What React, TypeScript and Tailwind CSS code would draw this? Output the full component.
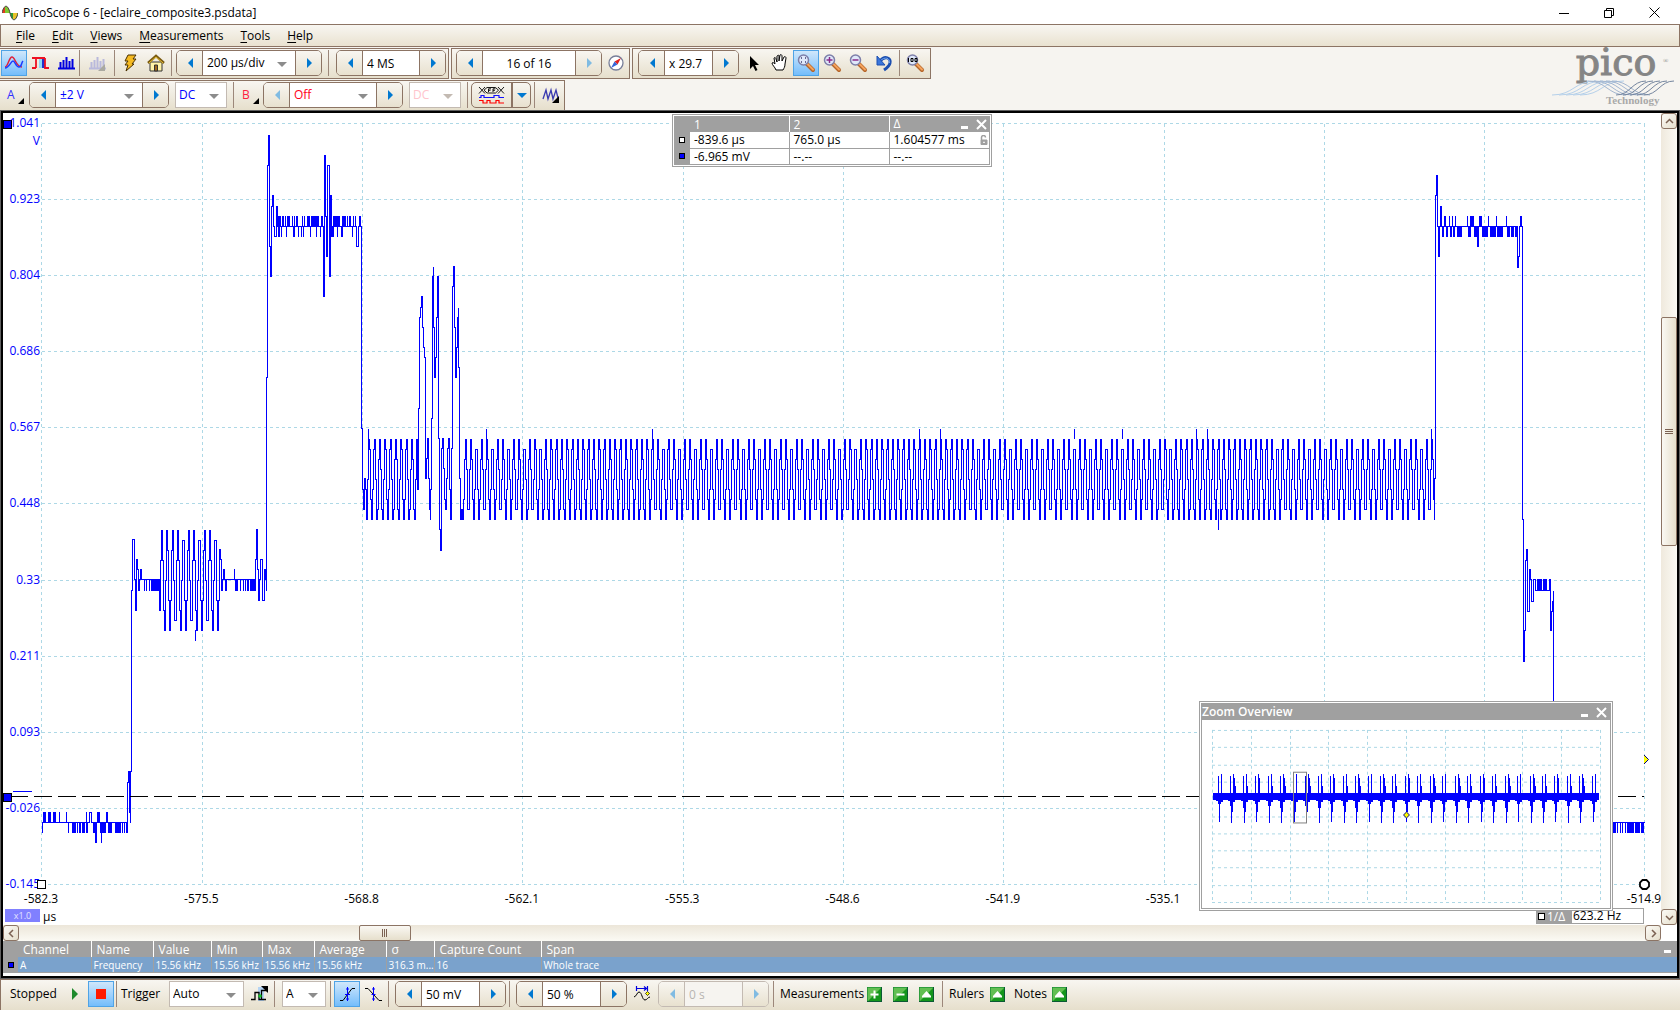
import React from "react";

type Point = [number, number];
type Spike = [number, number, number, number];

const yLabels = ["1.041", "0.923", "0.804", "0.686", "0.567", "0.448", "0.33", "0.211", "0.093", "-0.026", "-0.145"];
const xLabels = ["-582.3", "-575.5", "-568.8", "-562.1", "-555.3", "-548.6", "-541.9", "-535.1", "-528.4", "-521.7", "-514.9"];
const gridX = [41, 202, 362, 522, 683, 843, 1003, 1164, 1324, 1484, 1644];
const gridY = [123, 199, 275, 351, 427, 503, 580, 656, 732, 808, 884];

/* ---------- Trace ---------- */

const steps = (points: Point[]) => points.map(([x, y], i) => (i === 0 ? `M${x} ${y}` : `H${x}V${y}`)).join("");

// vertical excursions from a level, given as [first x, width] pairs
const spikes = (y: number, height: number, list: [number, number][]): Spike[] => list.map(([x, w]) => [x, y, w, height]);

const carrier = (from: number, to: number, peak: number, center: number, amp: number): Point[] => {
	const points: Point[] = [];
	for (let x = from; x <= to; x++) {
		const wave = Math.cos((2 * Math.PI * (x - peak)) / 5.339);
		points.push([x, center - Math.round((wave * amp) / 10) * 10]);
	}
	return points;
};

const tracePoints: Point[] = [
	[42, 832], [42, 822], [89, 822], [89, 812], [91, 812], [91, 822], [127, 822], [127, 832], [127, 782], [128, 771], [129, 812], [130, 822], [130, 771],
	[131, 590], [132, 539], [133, 539], [134, 579], [135, 610], [136, 559], [137, 569], [138, 579], [159, 579],
	...carrier(159, 218, 161, 580, 49),
	[219, 549], [220, 559], [221, 579], [254, 579], [255, 559], [256, 529], [257, 569], [258, 600], [259, 579], [260, 559], [261, 559], [262, 579], [262, 600], [263, 600], [264, 569], [265, 579],
	[266, 590], [266, 377], [267, 165], [268, 135], [269, 145], [269, 246], [270, 276], [271, 206], [272, 195], [273, 226], [274, 236], [276, 206], [277, 226],
	[323, 226], [323, 296], [324, 155], [325, 155], [325, 216], [326, 256], [327, 165], [328, 165], [329, 276], [330, 195], [331, 195], [331, 236],
	[333, 226], [356, 226], [356, 246], [357, 246], [358, 226], [361, 226], [361, 428], [362, 489], [363, 509], [364, 478], [365, 489],
	...carrier(366, 416, 368.3, 479, 40),
	[417, 489], [418, 408], [419, 317], [420, 307], [421, 296], [422, 327], [423, 347], [424, 357], [425, 478], [426, 458], [427, 438], [428, 478], [429, 509],
	[430, 519], [430, 489], [431, 418], [432, 276], [433, 266], [433, 327], [434, 377], [435, 377], [435, 357], [436, 317], [437, 276], [438, 286], [438, 438],
	[439, 529], [440, 550], [441, 529], [441, 448], [442, 438], [443, 468], [444, 499], [445, 509], [446, 478], [447, 448], [448, 438], [449, 489],
	[450, 519], [451, 448], [452, 286], [453, 266], [454, 276], [454, 327], [455, 377], [456, 347], [457, 317], [458, 307], [458, 367], [459, 478],
	[460, 519], [461, 509],
	...carrier(462, 1433, 470.2, 479, 39),
	[1434, 519], [1434, 478], [1435, 478], [1435, 195], [1436, 175], [1437, 175], [1437, 226], [1438, 256], [1439, 226], [1440, 206], [1441, 226],
	[1517, 226], [1517, 267], [1518, 256], [1519, 226], [1522, 226], [1522, 519], [1523, 661], [1524, 661], [1524, 630], [1525, 560], [1526, 549],
	[1527, 569], [1527, 611], [1528, 611], [1529, 569], [1530, 579], [1531, 601], [1532, 601], [1533, 579], [1535, 579], [1535, 590], [1550, 590],
	[1550, 630], [1551, 630], [1551, 611], [1552, 601], [1553, 590], [1553, 822], [1644, 822],
];

const traceSpikes: Spike[] = [
	...spikes(812, 10, [[43, 3], [48, 3], [53, 3], [59, 1], [66, 1], [86, 1], [97, 3], [106, 2]]),
	...spikes(822, 11, [[68, 1], [72, 4], [77, 1], [79, 2], [82, 3], [86, 2], [93, 2], [100, 6], [108, 4], [115, 6], [122, 1], [124, 1], [126, 2]]),
	...spikes(822, 21, [[95, 2], [101, 1]]),
	...spikes(579, 12, [[138, 2], [144, 1], [146, 1], [149, 1], [151, 8], [221, 2], [225, 2], [235, 3], [240, 1], [243, 1], [245, 1], [247, 2], [250, 6]]),
	...spikes(569, 10, [[140, 2], [223, 2], [234, 1], [264, 2]]),
	...spikes(630, 11, [[195, 1]]),
	...spikes(216, 10, [[278, 3], [282, 2], [285, 1], [287, 3], [292, 1], [294, 1], [296, 2], [302, 1], [304, 1], [307, 3], [311, 8], [321, 2], [333, 7], [342, 4], [347, 1], [349, 2], [353, 1], [355, 1], [359, 2]]),
	...spikes(226, 11, [[278, 2], [281, 1], [286, 1], [293, 2], [298, 1], [301, 1], [303, 1], [310, 1], [316, 1], [320, 1], [331, 3], [337, 1], [341, 2], [352, 1]]),
	...spikes(216, 10, [[1441, 1], [1444, 2], [1449, 1], [1452, 1], [1455, 1], [1467, 1], [1470, 4], [1479, 3], [1488, 1], [1496, 1], [1506, 1], [1520, 2]]),
	...spikes(226, 11, [[1442, 2], [1446, 2], [1450, 2], [1453, 2], [1457, 5], [1468, 3], [1474, 3], [1482, 6], [1490, 6], [1497, 6], [1507, 3], [1511, 3], [1515, 3]]),
	...spikes(226, 21, [[1477, 2]]),
	...spikes(579, 11, [[1537, 5], [1543, 4], [1549, 2]]),
	...spikes(822, 11, [[1613, 3], [1617, 1], [1620, 1], [1622, 1], [1625, 1], [1627, 7], [1635, 5], [1641, 3]]),
	...spikes(429, 10, [[368, 1], [486, 1], [652, 1], [919, 1], [940, 1], [1074, 1], [1122, 1], [1196, 1], [1207, 1], [1431, 1]]),
	...spikes(509, 21, [[1218, 1]]),
];

const trace = steps(tracePoints);

const Plot = () => (
	<svg className="absolute inset-0 w-full h-full" viewBox="3 113 1658 812" preserveAspectRatio="none" shapeRendering="crispEdges" fill="none">
		<g transform="translate(.5 .5)" stroke="#add8e6" strokeDasharray="3 3">
			{gridX.map((x) => (
				<path key={x} d={`M${x} 123V884`} />
			))}
			{gridY.map((y) => (
				<path key={y} d={`M41 ${y}H1644`} />
			))}
		</g>
		<path d={trace} stroke="#0000ff" transform="translate(.5 .5)" />
		{traceSpikes.map(([x, y, w, h], i) => (
			<rect key={i} x={x} y={y} width={w} height={h} fill="#0000ff" />
		))}
		<path d="M10 796.5H1644" stroke="#000" strokeDasharray="18 6" />
		<path d="M13 791.5H32" stroke="#0000ff" />
		<path d="M3.5 120.5h8v8h-8zM3.5 793.5h8v8h-8z" fill="#0000ff" stroke="#000" />
		<path d="M1644 755v9l4-4.500z" fill="#ffff00" />
		<path d="M1644 755l4.500 4.500-4.500 4.500" stroke="#000080" shapeRendering="auto" />
	</svg>
);

const PlotHandles = () => (
	<>
		<svg className="absolute left-[34px] bottom-[36px] w-[9px] h-[9px]" viewBox="0 0 9 9">
			<rect x=".5" y=".5" width="8" height="8" fill="#fff" stroke="#000" />
		</svg>
		<svg className="absolute right-[11px] bottom-[35px] w-[11px] h-[11px]" viewBox="0 0 11 11">
			<path d="M3.500 1h4L10 3.500v4L7.500 10h-4L1 7.500v-4z" fill="#fff" stroke="#000" strokeWidth="1.800" />
		</svg>
	</>
);

/* ---------- Overview ---------- */

const bursts = Array.from({ length: 31 }, (_, i) => Math.round(1218 + i * 12.46));

const OverviewPlot = () => (
	<svg className="w-full h-full" viewBox="1202 720 408 189" preserveAspectRatio="none" shapeRendering="crispEdges" fill="none">
		<g stroke="#add8e6" strokeDasharray="3 3">
			{gridX.map((_, i) => (
				<path key={i} d={`M${Math.round(1212 + i * 38.8) + 0.5} 730V903`} />
			))}
			{gridX.map((_, i) => (
				<path key={i} d={`M1212 ${Math.round(730 + i * 17.3) + 0.5}H1601`} />
			))}
		</g>
		<g fill="#0000ff">
			<rect x="1213" y="793" width="386" height="7" />
			{bursts.map((x, i) => (
				<g key={x}>
					<rect x={x} y="776" width="1" height="22" />
					<rect x={x + 3} y="774" width="1" height="24" />
					<rect x={x + 4} y="778" width={i % 2} height="20" />
					<rect x={x + 4 + (i % 2)} y="786" width={i % 3 ? 1 : 0} height="10" />
					<rect x={x + 1} y="798" width="1" height={i % 3 ? 26 : 25} />
					<rect x={x} y="798" width="3" height={6 + (i % 3) * 2} />
					<rect x={x + 2} y="798" width={i % 4 ? 1 : 0} height="14" />
					<rect x={x + 3} y="798" width="2" height="4" />
					<rect x={x - 2} y="800" width="6" height="1" />
				</g>
			))}
		</g>
		<rect x="1293.500" y="772.500" width="13" height="51" stroke="#808080" />
		<path d="M1406.500 812.500l3 3-3 3-3-3z" fill="#ffff00" stroke="#000080" />
	</svg>
);

const PanelButtons = ({ name }: { name: string }) => (
	<div className="flex items-center text-white">
		<button aria-label={`Minimise ${name}`} className="w-[17px] h-4 flex items-center justify-center">
			<svg width="9" height="12" viewBox="0 0 9 12">
				<path d="M1 8h7v3H1z" fill="currentColor" />
			</svg>
		</button>
		<button aria-label={`Close ${name}`} className="w-[17px] h-4 flex items-center justify-center">
			<svg width="11" height="11" viewBox="0 0 11 11">
				<path d="M1 1l9 9M10 1l-9 9" stroke="currentColor" strokeWidth="2" />
			</svg>
		</button>
	</div>
);

const ZoomOverview = () => (
	<section className="absolute right-[48px] bottom-[14px] w-[414px] h-[210px] border border-[#a0a0a0] bg-white p-px">
		<div className="h-full border border-[#a0a0a0] flex flex-col">
			<header className="h-4 shrink-0 bg-[#a0a0a0] flex items-center justify-between">
				<h2 className="text-white font-semibold">Zoom Overview</h2>
				<PanelButtons name="overview" />
			</header>
			<div className="flex-1 min-h-0">
				<OverviewPlot />
			</div>
		</div>
	</section>
);

const Marker = ({ filled = false }: { filled?: boolean }) => (
	<svg className="block mx-auto" width="6" height="6" viewBox="0 0 6 6">
		<rect x=".5" y=".5" width="5" height="5" fill={filled ? "#0000ff" : "#ffffff"} stroke="#000" />
	</svg>
);

const RulerLegend = () => (
	<section className="absolute top-px left-1/2 -translate-x-1/2 w-[320px] border border-[#a0a0a0] bg-white p-px">
		<table className="w-full table-fixed border-collapse leading-[15px]">
			<colgroup>
				<col className="w-[16px]" />
				<col className="w-[99px]" />
				<col className="w-[100px]" />
				<col />
			</colgroup>
			<thead className="bg-[#a0a0a0] text-white text-left">
				<tr className="h-4">
					<th></th>
					<th className="font-normal px-1">1</th>
					<th className="font-normal px-1 border-l border-white">2</th>
					<th className="font-normal pl-1 border-l border-white">
						<div className="flex justify-between">
							Δ
							<PanelButtons name="rulers" />
						</div>
					</th>
				</tr>
			</thead>
			<tbody>
				<tr className="h-4 border-b border-[#a0a0a0]">
					<td className="bg-[#a0a0a0]"><Marker /></td>
					<td className="px-1">-839.6 µs</td>
					<td className="px-1 border-l border-[#a0a0a0]">765.0 µs</td>
					<td className="pl-1 pr-px border-l border-r border-[#a0a0a0]">
						<div className="flex items-center justify-between">
							1.604577 ms
							<svg width="8" height="10" viewBox="0 0 8 10" fill="none" stroke="#a0a0a0">
								<path d="M1.500 5V2.500a2 2 0 0 1 4 0" strokeWidth="1.500" />
								<path d="M1 5h6v4.500H1z" fill="#a0a0a0" />
								<path d="M3 7.300h2" stroke="#fff" />
							</svg>
						</div>
					</td>
				</tr>
				<tr className="h-4 border-b border-[#a0a0a0]">
					<td className="bg-[#a0a0a0]"><Marker filled /></td>
					<td className="px-1">-6.965 mV</td>
					<td className="px-1 border-l border-[#a0a0a0]">--.--</td>
					<td className="px-1 border-l border-r border-[#a0a0a0]">--.--</td>
				</tr>
			</tbody>
		</table>
	</section>
);

/* ---------- Controls ---------- */

const Arrow = ({ dir, className = "text-[#0078d0]" }: { dir: "left" | "right" | "down"; className?: string }) => {
	const d = { left: "M9 1v10L4 6z", right: "M4 1v10l5-5z", down: "M1 4h10L6 9z" }[dir];
	return (
		<svg className={className} width="12" height="12" viewBox="0 0 12 12">
			<path d={d} fill="currentColor" />
		</svg>
	);
};

interface ISpinner {
	label: string;
	value: string;
	width: string;
	select?: boolean;
	center?: boolean;
	color?: string;
	off?: "left" | "right" | "all";
}

const Spinner = ({ label, value, width, select, center, color = "text-black", off }: ISpinner) => {
	const leftOff = off === "left" || off === "all";
	const rightOff = off === "right" || off === "all";
	const border = off === "all" ? "border-[#c3bab2]" : "border-[#8c7464]";
	const button = "w-[25px] h-full flex items-center justify-center bg-linear-to-b from-[#f8f6f1] to-[#e8e1cf]";
	const field = `w-full h-full outline-none ${color} ${off === "all" ? "bg-[#f6f4f0]" : "bg-white"} ${center ? "text-center" : "px-1"}`;
	return (
		<div className={`flex h-[26px] shrink-0 border rounded-[5px] overflow-hidden ${border}`}>
			<button aria-label={`${label} down`} className={button}>
				<Arrow dir="left" className={leftOff ? "text-[#80bbe2]" : "text-[#0078d0]"} />
			</button>
			<div className={`relative border-x ${border} ${width}`}>
				{select ? (
					<>
						<select aria-label={label} defaultValue={value} className={`${field} appearance-none`}>
							<option>{value}</option>
						</select>
						<Arrow dir="down" className="absolute right-[7px] top-[7px] text-[#8c8c8c] pointer-events-none" />
					</>
				) : (
					<input aria-label={label} defaultValue={value} className={field} />
				)}
			</div>
			<button aria-label={`${label} up`} className={button}>
				<Arrow dir="right" className={rightOff ? "text-[#80bbe2]" : "text-[#0078d0]"} />
			</button>
		</div>
	);
};

const Dropdown = ({ label, value, width, color = "text-black", off }: { label: string; value: string; width: string; color?: string; off?: boolean }) => (
	<div className={`relative shrink-0 h-[26px] border border-[#c3bab2] bg-white ${width}`}>
		<select aria-label={label} defaultValue={value} className={`w-full h-full px-[3px] outline-none appearance-none ${color}`}>
			<option>{value}</option>
		</select>
		<Arrow dir="down" className={`absolute right-[6px] top-[7px] pointer-events-none ${off ? "text-[#c3bab2]" : "text-[#8c8c8c]"}`} />
	</div>
);

const Separator = () => <div className="w-px h-[26px] shrink-0 bg-[#9c877a]"></div>;

const Tool = ({ label, on, children }: { label: string; on?: boolean; children: React.ReactNode }) => (
	<button aria-label={label} className={`size-[26px] shrink-0 flex items-center justify-center ${on ? "border border-[#4fa3e6] bg-linear-to-b from-[#cfe7fb] to-[#74bdfb]" : ""}`}>
		<svg className="shrink-0" width="20" height="20" viewBox="0 0 20 20" fill="none">
			{children}
		</svg>
	</button>
);

const Strip = ({ className, children }: { className: string; children: React.ReactNode }) => (
	<div className={`h-[31px] flex items-center pb-px border border-[#8c7464] bg-linear-to-b from-[#f8f6f1] to-[#e6dfcc] ${className}`}>{children}</div>
);

const Magnifier = ({ children }: { children?: React.ReactNode }) => (
	<>
		<path d="M11 11l6 6" stroke="#b5652a" strokeWidth="4" strokeLinecap="round" />
		<path d="M11.500 11l5.500 5.500" stroke="#f5a35c" strokeWidth="2" strokeLinecap="round" />
		<circle cx="7.500" cy="7" r="5" fill="#dfe8fa" stroke="#7d7fa8" strokeWidth="1.500" />
		{children}
	</>
);

const GreenButton = ({ label, d }: { label: string; d: string }) => (
	<button aria-label={label} className="size-[15px] shrink-0">
		<svg width="15" height="15" viewBox="0 0 15 15">
			<rect x=".5" y=".5" width="14" height="14" fill="#14961c" stroke="#0b5a34" />
			<path d="M1 1h13L1 14z" fill="#62bf52" />
			<path d="M.500 14V.500H14" fill="none" stroke="#2f9d3c" />
			<path d={d} fill="#fff" />
		</svg>
	</button>
);

const plus = "M6.500 3.500h2v3h3v2h-3v3h-2v-3h-3v-2h3z";
const minus = "M3.500 6.500h8v2h-8z";
const up = "M7.500 4l4.500 5v1.500H3V9z";

/* ---------- Bars ---------- */

const TitleBar = () => (
	<header className="h-6 shrink-0 flex items-center bg-white pt-px">
		<svg className="ml-[2px]" width="16" height="16" viewBox="0 0 16 16">
			<path d="M0 8C2 -1 6 -1 8 8z" fill="#e23a1c" />
			<path d="M3 8V1.300C5.500 1 7 4 8 8z" fill="#7ec832" />
			<path d="M8 8c2 9 6 9 8 0z" fill="#2c9a34" />
			<path d="M11 8v6.300c2 1 4-2 5-6.300z" fill="#e8c229" />
			<path d="M0 8C2 -1 6 -1 8 8s6 9 8 0" fill="none" stroke="#444" />
		</svg>
		<h1 className="ml-[5px] flex-1">PicoScope 6 - [eclaire_composite3.psdata]</h1>
		<div className="flex mr-[3px]">
			<button aria-label="Minimise" className="w-[45px] h-6 flex items-center justify-center">
				<svg width="10" height="10" viewBox="0 0 10 10"><path d="M0 5.500h10" stroke="#000" /></svg>
			</button>
			<button aria-label="Restore" className="w-[45px] h-6 flex items-center justify-center">
				<svg width="10" height="10" viewBox="0 0 10 10" fill="none"><path d="M.500 2.500h7v7h-7zM2.500 2.500v-2h7v7h-2" stroke="#000" /></svg>
			</button>
			<button aria-label="Close" className="w-[46px] h-6 flex items-center justify-center">
				<svg width="11" height="11" viewBox="0 0 11 11"><path d="M.500.500l10 10M10.500.500l-10 10" stroke="#000" /></svg>
			</button>
		</div>
	</header>
);

const MenuBar = () => (
	<nav className="h-[23px] shrink-0 flex items-center gap-[17px] pl-[15px] border border-[#8c7464] bg-linear-to-b from-[#f8f6f1] to-[#e9e2d0]">
		{["File", "Edit", "Views", "Measurements", "Tools", "Help"].map((item) => (
			<button key={item}>
				<span className="underline underline-offset-2">{item[0]}</span>
				{item.slice(1)}
			</button>
		))}
	</nav>
);

const ChannelButton = ({ name, color }: { name: string; color: string }) => (
	<button className={`w-6 h-[26px] shrink-0 flex items-center justify-between pl-[7px] ${color}`}>
		{name}
		<svg className="self-end mb-1" width="6" height="6" viewBox="0 0 6 6"><path d="M6 0v6H0z" fill="#000" /></svg>
	</button>
);

const Logo = () => (
	<svg className="overflow-visible" width="124" height="60" viewBox="0 0 124 60" fill="none">
		<text x="64" y="27" textAnchor="middle" fontFamily="'DejaVu Serif', serif" fontSize="38" fill="#858585" stroke="#858585" strokeWidth="1">pico</text>
		<text x="111" y="15" fontFamily="'Liberation Serif', serif" fontSize="7" fill="#858585">®</text>
		{[0, 1, 2, 3, 4].map((i) => (
			<path key={i} d={`M${i * 7} 47c22 0 22-14 44-14`} stroke="#b5d0ea" />
		))}
		{[0, 1, 2, 3, 4].map((i) => (
			<path key={i} d={`M${36 + i * 6} 33c18 0 20 14 38 14`} stroke="#a3b6d0" />
		))}
		{[0, 1, 2, 3, 4].map((i) => (
			<path key={i} d={`M${64 + i * 7} 47c14 0 16-14 30-14`} stroke="#75869f" />
		))}
		<text x="54" y="56" fontFamily="'Liberation Serif', serif" fontWeight="bold" fontSize="11" fill="#a9a9a9">Technology</text>
	</svg>
);

const spectrum = "M2 15.500h17M4.500 15V9M7.500 15V7M10.500 15V4M13.500 15V8M16.500 15V6";

const Toolbars = () => (
	<div className="h-[63px] shrink-0 flex items-start justify-between bg-[#f6f4f0] pt-px">
		<div className="flex flex-col gap-px">
			<div className="flex gap-[2px]">
				<Strip className="pl-px pr-[2px] border-l-0">
					<Tool label="Scope mode" on>
						<path d="M1 14c3 0 4-10 7-10s4 10 10 10" stroke="#e0203a" strokeWidth="1.500" />
						<path d="M1 15C5 15 7 8 9 8s3 6 6 6 2-4 4-6" stroke="#1c3cff" strokeWidth="1.500" />
					</Tool>
					<Tool label="Persistence mode">
						<path d="M12 5h3v10h-3z" fill="#2233cc" />
						<path d="M9 5h3v10H9z" fill="#8fd8f5" />
						<path d="M2 5h13M6 5v10M2 15h4M15 5v10h4" stroke="#ee1122" strokeWidth="1.800" />
					</Tool>
					<Tool label="Spectrum mode"><path d={spectrum} stroke="#0000e0" strokeWidth="2" /></Tool>
					<Separator />
					<div className="mx-1">
						<Tool label="Spectrum options">
							<path d={spectrum} stroke="#b9b9dc" strokeWidth="2" />
							<path d="M18 11v7h-7z" fill="#aaa9a0" />
						</Tool>
					</div>
					<Separator />
					<div className="mx-[2px] flex">
						<Tool label="Auto setup"><path d="M8 2h8l-3 4h3l-4 5h2l-8 7 2-6H5l3-4H5z" fill="#f5ba21" stroke="#4a3000" /></Tool>
						<Tool label="Home">
							<path d="M4 9h12v9H4z" fill="#fff3a8" stroke="#333" />
							<path d="M2 10l8-7 8 7" stroke="#7a5a10" strokeWidth="2.500" />
							<path d="M3 10l7-6 7 6" stroke="#e8c030" />
							<path d="M8.500 18v-6h3v6z" fill="#a06a20" stroke="#333" />
						</Tool>
					</div>
					<Separator />
					<div className="ml-1 mr-[6px]">
						<Spinner label="Timebase" value="200 µs/div" width="w-[94px]" select />
					</div>
					<Separator />
					<div className="ml-[7px]">
						<Spinner label="Samples" value="4 MS" width="w-[58px]" />
					</div>
				</Strip>
				<Strip className="pl-1">
					<Spinner label="Buffer" value="16 of 16" width="w-[94px]" center off="right" />
					<div className="ml-[1px]">
						<Tool label="Buffer navigator">
							<circle cx="10" cy="10" r="7" fill="#fff" stroke="#777e99" strokeWidth="1.300" />
							<path d="M15 5l-3.500 6.500-3-3z" fill="#e02020" />
							<path d="M5 15l3.500-6.500 3 3z" fill="#3566d8" />
						</Tool>
					</div>
				</Strip>
				<Strip className="pl-[5px]">
					<Spinner label="Zoom" value="x 29.7" width="w-[49px]" />
					<div className="ml-[2px] mr-[2px] flex">
						<Tool label="Normal selection"><path d="M6 3v13l3-3 2.500 5 2-1-2.500-5h4z" fill="#000" /></Tool>
						<Tool label="Hand">
							<path d="M6 17c-1-3-4-5-4-7 1-1 2 0 3 1L4 5c1-1 2 0 2 1l1 3V3c1-1 2-1 2 0v5l1-6c1-1 2 0 2 1v5l2-4c1-1 2 0 2 1l-1 6c0 3-1 4-2 6z" fill="#fff" stroke="#000" />
						</Tool>
						<Tool label="Marquee zoom" on><Magnifier><path d="M5 5h1M9 5h1M5 9h1M9 9h1" stroke="#404070" strokeWidth="1.500" /></Magnifier></Tool>
						<Tool label="Zoom in"><Magnifier><path d="M4.500 7h6M7.500 4v6" stroke="#8a2a8a" strokeWidth="1.500" /></Magnifier></Tool>
						<Tool label="Zoom out"><Magnifier><path d="M4.500 7h6" stroke="#8a2a8a" strokeWidth="1.500" /></Magnifier></Tool>
						<Tool label="Undo zoom">
							<path d="M6 8c5-6 11-3 10 2-.500 3-3 5-6 7" stroke="#1c4fb0" strokeWidth="3" />
							<path d="M6 8c5-5 10-3 9.500 2" stroke="#6fa4f0" />
							<path d="M3 3v9h8z" fill="#3a76dc" stroke="#1c4fb0" />
						</Tool>
					</div>
					<Separator />
					<div className="mx-[2px]">
						<Tool label="Zoom 100%"><Magnifier><path d="M3.500 5v4M6 5.500h2v3H6zM10 5.500h2v3h-2z" stroke="#000" /></Magnifier></Tool>
					</div>
				</Strip>
			</div>
			<div className="flex">
				<Strip className="pr-px border-l-0">
					<ChannelButton name="A" color="text-[#3030ff]" />
					<div className="ml-[5px] mr-[6px]">
						<Spinner label="Channel A range" value="±2 V" width="w-[88px]" select color="text-[#0000ff]" />
					</div>
					<Dropdown label="Channel A coupling" value="DC" width="w-[52px]" color="text-[#0000ff]" />
					<div className="ml-[6px] mr-[1px]"><Separator /></div>
					<ChannelButton name="B" color="text-[#ff2040]" />
					<div className="ml-[4px] mr-[6px]">
						<Spinner label="Channel B range" value="Off" width="w-[88px]" select color="text-[#ff0020]" off="left" />
					</div>
					<Dropdown label="Channel B coupling" value="DC" width="w-[52px]" color="text-[#ffc4cc]" off />
					<div className="ml-[6px] mr-[3px]"><Separator /></div>
					<div className="flex h-[26px] border border-[#8c7464] rounded-[5px] bg-linear-to-b from-[#f8f6f1] to-[#e8e1cf]">
						<button aria-label="Digital inputs" className="w-[39px] flex items-center justify-center">
							<svg width="27" height="18" viewBox="0 0 27 18" fill="none">
								<path d="M1 1l6 6.500M1 7.500L7 1M6 4.200L9 1.500h8.500l3 2.700-3 2.800H9zM20 1l6 6.500M20 7.500L26 1M10.500 6V2.800h2.500M10.500 4.300h2M15 6V2.800h2.500M15 4.300h2" stroke="#000" strokeWidth=".9" />
								<path d="M1 11.500h2v-2h3v2h10v-2h5v2h5" stroke="#1010ff" strokeWidth="1.200" />
								<path d="M1 14.500h4V17h4v-2.500h3V17h6v-2.500h3V17h5" stroke="#ff0000" strokeWidth="1.200" />
							</svg>
						</button>
						<button aria-label="Digital options" className="w-[19px] flex items-center justify-center border-l-2 border-[#8c7464]">
							<Arrow dir="down" />
						</button>
					</div>
					<div className="ml-[3px] mr-[2px]"><Separator /></div>
					<Tool label="Signal generator">
						<path d="M3 14l3-9 2 9 3-9 2 9 3-9 2 8" stroke="#3a3ab0" strokeWidth="1.300" />
						<path d="M19 11v7h-7z" fill="#000" />
					</Tool>
				</Strip>
			</div>
		</div>
		<div className="pr-1">
			<Logo />
		</div>
	</div>
);

const ScrollButton = ({ label, d }: { label: string; d: string }) => (
	<button aria-label={label} className="size-4 shrink-0 flex items-center justify-center rounded-[3px] border border-[#8c7464] bg-linear-to-br from-[#fbfaf6] to-[#e6dfcc]">
		<svg width="9" height="9" viewBox="0 0 9 9" fill="none"><path d={d} stroke="#7b6152" strokeWidth="1.500" /></svg>
	</button>
);

const measurementHeads = ["", "Channel", "Name", "Value", "Min", "Max", "Average", "σ", "Capture Count", "Span"];
const measurement = ["A", "Frequency", "15.56 kHz", "15.56 kHz", "15.56 kHz", "15.56 kHz", "316.3 m...", "16", "Whole trace"];

const MeasurementTable = () => (
	<div className="relative shrink-0 border-b border-[#a0a0a0]">
		<table className="w-full table-fixed border-collapse">
			<colgroup>
				<col className="w-[15px]" />
				<col className="w-[73px]" />
				<col className="w-[62px]" />
				<col className="w-[58px]" />
				<col className="w-[51px]" />
				<col className="w-[52px]" />
				<col className="w-[72px]" />
				<col className="w-[48px]" />
				<col className="w-[107px]" />
				<col />
			</colgroup>
			<thead className="bg-[#a0a0a0] text-white text-left leading-[15px]">
				<tr className="h-4">
					{measurementHeads.map((head, i) => (
						<th key={i} className={`font-normal p-0 pt-px pl-[5px] whitespace-nowrap ${i > 1 ? "border-l border-white" : ""}`}>{head}</th>
					))}
				</tr>
			</thead>
			<tbody className="bg-[#7aa2cc] text-white text-[10px] leading-[14px]">
				<tr className="h-[15px]">
					<td className="bg-[#a0a0a0] p-0"><Marker filled /></td>
					{measurement.map((value, i) => (
						<td key={i} className={`p-0 pt-px pl-[2px] whitespace-nowrap ${i > 0 ? "border-l border-[#a0a0a0]" : ""}`}>{value}</td>
					))}
				</tr>
			</tbody>
		</table>
		<button aria-label="Collapse measurements" className="absolute right-0 top-0 w-5 h-4 flex items-center justify-center">
			<svg width="7" height="10" viewBox="0 0 7 10"><path d="M0 6h7v3H0z" fill="#fff" /></svg>
		</button>
	</div>
);

const ScopeView = () => (
	<main className="flex-1 min-h-0 flex flex-col border border-[#606060]">
		<div className="flex-1 min-h-0 flex flex-col border-2 border-black bg-white pb-[3px]">
			<div className="flex-1 min-h-0 flex">
				<div className="relative flex-1 min-w-0 flex flex-col overflow-hidden">
					<Plot />
					<div className="relative flex-1 w-[37px] pt-[2px] pb-px flex flex-col justify-between text-right text-[#0000ff] leading-4">
						{yLabels.map((label) => (
							<div key={label} className="whitespace-nowrap flex justify-end">{label}</div>
						))}
						<span className="absolute right-0 top-5">V</span>
					</div>
					<div className="relative h-[15px] ml-[38px] mr-[17px] flex justify-between leading-3">
						{xLabels.map((label) => (
							<div key={label} className="w-0 flex justify-center">{label}</div>
						))}
					</div>
					<div className="relative h-[17px] pl-[2px] mr-[17px] flex items-start leading-[17px]">
						<span className="w-[35px] h-[13px] mt-px text-[9px] leading-[13px] text-center bg-[#8080ff] text-[#e4e4ff]">x1.0</span>
						<span className="ml-[3px] flex-1">µs</span>
						<div className="w-[108px] h-4 flex items-center bg-[#a0a0a0] text-white pl-[2px]">
							<svg width="7" height="7" viewBox="0 0 7 7"><rect x=".5" y=".5" width="6" height="6" fill="#fff" stroke="#000" /></svg>
							<span className="ml-[2px] w-6">1/Δ</span>
							<span className="flex-1 h-4 leading-[14px] bg-white text-black border border-[#a0a0a0] pl-px">623.2 Hz</span>
						</div>
					</div>
					<PlotHandles />
					<RulerLegend />
					<ZoomOverview />
				</div>
				<div className="w-4 flex flex-col bg-linear-to-r from-[#efe9dd] to-[#fbfaf4]">
					<ScrollButton label="Scroll up" d="M1 6l3.500-3.500L8 6" />
					<div className="flex-[188]"></div>
					<div className="flex-[227] rounded-[2px] border border-[#8c7464] bg-linear-to-r from-[#faf8f3] to-[#e6dfcc] flex items-center justify-center">
						<svg width="8" height="6" viewBox="0 0 8 6"><path d="M0 .500h8M0 2.500h8M0 4.500h8" stroke="#7b6152" /></svg>
					</div>
					<div className="flex-[363]"></div>
					<ScrollButton label="Scroll down" d="M1 3l3.500 3.500L8 3" />
				</div>
			</div>
			<div className="h-4 shrink-0 flex mr-4 bg-linear-to-b from-[#ece6d9] to-[#fbfaf4]">
				<ScrollButton label="Scroll left" d="M6 1L2.500 4.500 6 8" />
				<div className="flex-[340]"></div>
				<div className="flex-[50] rounded-[2px] border border-[#8c7464] bg-linear-to-b from-[#faf8f3] to-[#e6dfcc] flex items-center justify-center">
					<svg width="6" height="8" viewBox="0 0 6 8"><path d="M.500 0v8M2.500 0v8M4.500 0v8" stroke="#7b6152" /></svg>
				</div>
				<div className="flex-[1234]"></div>
				<ScrollButton label="Scroll right" d="M3 1l3.500 3.500L3 8" />
			</div>
			<MeasurementTable />
		</div>
	</main>
);

const TriggerBar = () => (
	<footer className="h-[31px] shrink-0 flex items-center pb-[2px] border-t border-l border-[#8c7464] bg-linear-to-b from-[#f8f6f1] to-[#e6dfcc]">
		<span className="w-[52px] ml-[9px] whitespace-nowrap">Stopped</span>
		<Tool label="Start"><path d="M7 4v12l6-6z" fill="#1f8a2c" /></Tool>
		<Tool label="Stop" on><path d="M5 5h10v10H5z" fill="#ff1a00" /></Tool>
		<div className="ml-[2px] mr-[4px]"><Separator /></div>
		<span className="w-[48px]">Trigger</span>
		<Dropdown label="Trigger mode" value="Auto" width="w-[75px]" />
		<div className="ml-[2px] mr-[2px]">
			<Tool label="Advanced triggers">
				<path d="M9 3h6v14H9z" fill="#b5d4f4" />
				<path d="M2 15.500h4V8.500h4v7h7M12.500 15V6.500H18" stroke="#000" strokeWidth="1.300" />
				<path d="M12 2h7v7z" fill="#000" />
				<circle cx="11" cy="12" r="1.800" fill="#16c022" />
			</Tool>
		</div>
		<Separator />
		<div className="ml-[7px] mr-[4px]"><Dropdown label="Trigger channel" value="A" width="w-[44px]" /></div>
		<Separator />
		<div className="ml-[3px] mr-[2px] flex">
			<Tool label="Rising edge" on>
				<path d="M3 16.500h3L15 4.500h3" stroke="#000" />
				<path d="M10.500 3v14M9 5h3M9 15h3M8 10.500h5" stroke="#0000ff" />
			</Tool>
			<Tool label="Falling edge">
				<path d="M2 4.500h3l11 12h3" stroke="#000" />
				<path d="M10.500 3v14M9 5h3M9 15h3M8.500 10.500h4" stroke="#0000ff" />
			</Tool>
		</div>
		<Separator />
		<div className="ml-[6px] mr-[3px]"><Spinner label="Threshold" value="50 mV" width="w-[59px]" /></div>
		<Separator />
		<div className="ml-[6px]"><Spinner label="Pre-trigger" value="50 %" width="w-[59px]" /></div>
		<div className="ml-[2px] mr-[3px]">
			<Tool label="Post-trigger delay">
				<path d="M2 13c3-1 3-5 5-5 3 0 3 8 6 8 2 0 3-3 5-3" stroke="#000" />
				<path d="M4.500 2v5M4 4.500h11M12 2.500l2.500 2-2.500 2M15.500 2v5" stroke="#0000e0" strokeWidth="1.200" />
				<path d="M15.500 7.500l2 2-2 2-2-2z" fill="#ffff00" stroke="#000" strokeWidth=".7" />
			</Tool>
		</div>
		<Spinner label="Delay" value="0 s" width="w-[59px]" color="text-[#b8b4b0]" off="all" />
		<div className="ml-[4px] mr-[6px]"><Separator /></div>
		<span className="w-[87px]">Measurements</span>
		<div className="flex gap-[11px] mr-[8px]">
			<GreenButton label="Add measurement" d={plus} />
			<GreenButton label="Delete measurement" d={minus} />
			<GreenButton label="Edit measurement" d={up} />
		</div>
		<Separator />
		<span className="w-[41px] ml-[6px]">Rulers</span>
		<GreenButton label="Rulers" d={up} />
		<span className="w-[38px] ml-[9px]">Notes</span>
		<GreenButton label="Notes" d={up} />
	</footer>
);

const App = () => (
	<div className="h-screen flex flex-col overflow-hidden bg-white text-black text-[12px] leading-4 font-['Open_Sans','Noto_Sans',sans-serif]">
		<TitleBar />
		<MenuBar />
		<Toolbars />
		<ScopeView />
		<TriggerBar />
	</div>
);

export default App;
